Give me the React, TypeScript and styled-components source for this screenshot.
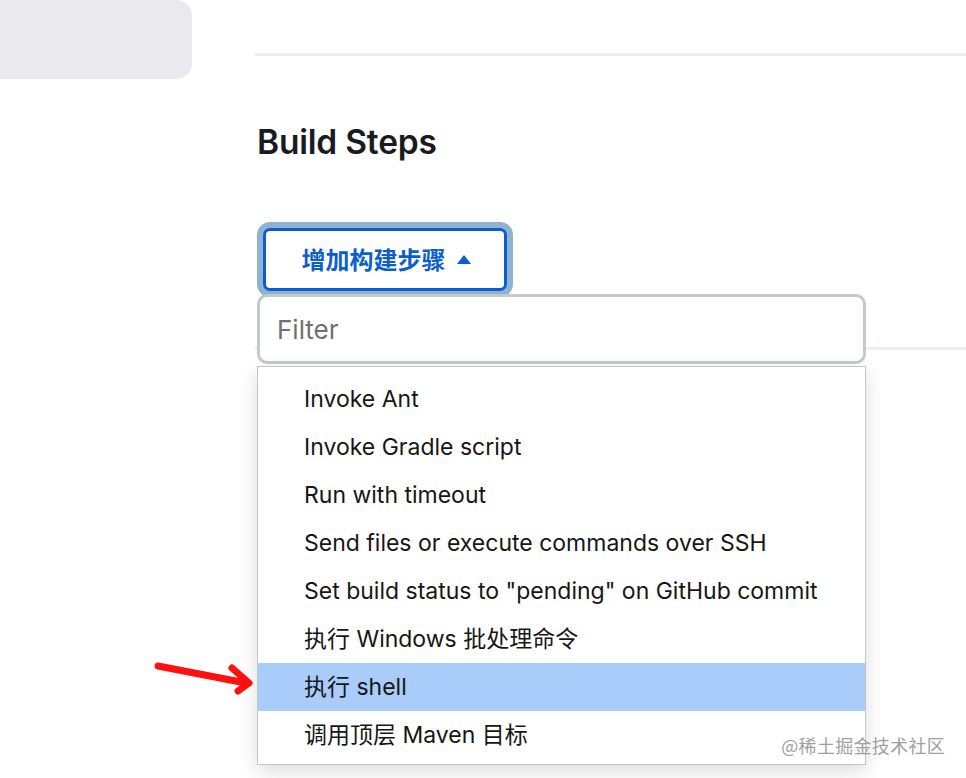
import { createGlobalStyle } from "styled-components";
import styled from "styled-components";

const GlobalStyle = createGlobalStyle`
  html, body {
    margin: 0;
    padding: 0;
    background: #ffffff;
  }
  body {
    font-family: Inter, "Noto Sans", "Noto Sans CJK SC", sans-serif;
    color: #1b1b1f;
  }
`;

const Page = styled.div`
  position: relative;
  display: flex;
  width: 966px;
  height: 778px;
  overflow: hidden;
`;

const Sidebar = styled.aside`
  width: 255px;
  flex-shrink: 0;
`;

const SideCard = styled.div`
  width: 192px;
  height: 79px;
  background: #e9e9ee;
  border-radius: 0 16px 16px 0;
`;

const Main = styled.main`
  flex: 1;
  padding-top: 53px;
`;

const Rule = styled.div<{ $gap?: number }>`
  height: 3px;
  margin-top: ${(p) => p.$gap ?? 0}px;
  background: #efeff1;
`;

const Heading = styled.h2`
  margin: 66px 0 0 2px;
  font-size: 33.5px;
  line-height: 41px;
  font-weight: 600;
  letter-spacing: -0.2px;
  color: #1b1b1f;
`;

const ButtonHolder = styled.div`
  position: relative;
  margin: 65px 0 0 8px;
  width: 244px;
`;

const AddButton = styled.button`
  display: flex;
  align-items: center;
  justify-content: center;
  gap: 11px;
  width: 244px;
  height: 63px;
  padding: 0 0 2px 2px;
  background: #ffffff;
  border: 3px solid #0b5fcd;
  border-radius: 7px;
  box-shadow: 0 0 0 6px #8eb2d1;
  color: #0b5fcd;
  font-family: Inter, "Noto Sans CJK SC", sans-serif;
  font-size: 24px;
  font-weight: 700;
  cursor: pointer;
`;

const Caret = styled.span`
  width: 0;
  height: 0;
  margin-top: 1px;
  border-left: 7.5px solid transparent;
  border-right: 7.5px solid transparent;
  border-bottom: 9px solid #0b5fcd;
`;

const Dropdown = styled.div`
  position: absolute;
  top: calc(100% + 3px);
  left: -6px;
  width: 609px;
  z-index: 2;
`;

const FilterInput = styled.input`
  box-sizing: border-box;
  display: block;
  width: 609px;
  height: 70px;
  padding: 0 17px;
  border: 3px solid #c3c9cc;
  border-radius: 10px;
  background: #ffffff;
  font-family: Inter, "Noto Sans", sans-serif;
  font-size: 26px;
  color: #1b1b1f;
  outline: none;
  &::placeholder {
    color: #707070;
  }
`;

const Menu = styled.ul`
  box-sizing: border-box;
  list-style: none;
  margin: 2px 0 0;
  padding: 8px 0;
  width: 609px;
  height: 399px;
  background: #ffffff;
  border: 1px solid #c6c6c6;
  box-shadow: 0 6px 18px rgba(0, 0, 0, 0.14);
`;

const MenuItem = styled.li<{ $active?: boolean }>`
  height: 48px;
  line-height: 48px;
  padding-left: 46px;
  font-family: Inter, "Noto Sans", "Noto Sans CJK SC", sans-serif;
  font-size: 23px;
  color: #161616;
  white-space: nowrap;
  background: ${(p) => (p.$active ? "#a9ccfb" : "transparent")};
`;

const Arrow = styled.svg`
  position: absolute;
  left: 152px;
  top: 658px;
  z-index: 3;
`;

const Watermark = styled.div`
  position: absolute;
  right: 21px;
  bottom: 20px;
  z-index: 3;
  font-family: "Noto Sans CJK SC", sans-serif;
  font-size: 18px;
  color: #a0a0a0;
  letter-spacing: 0.3px;
`;

const steps = [
  "Invoke Ant",
  "Invoke Gradle script",
  "Run with timeout",
  "Send files or execute commands over SSH",
  'Set build status to "pending" on GitHub commit',
  "执行 Windows 批处理命令",
  "执行 shell",
  "调用顶层 Maven 目标",
];

export default function App() {
  return (
    <>
      <GlobalStyle />
      <Page>
        <Sidebar>
          <SideCard />
        </Sidebar>
        <Main>
          <Rule />
          <Heading>Build Steps</Heading>
          <ButtonHolder>
            <AddButton>
              增加构建步骤
              <Caret />
            </AddButton>
            <Dropdown>
              <FilterInput placeholder="Filter" />
              <Menu>
                {steps.map((s) => (
                  <MenuItem key={s} $active={s === "执行 shell"}>
                    {s}
                  </MenuItem>
                ))}
              </Menu>
            </Dropdown>
          </ButtonHolder>
          <Rule $gap={56} />
        </Main>
        <Arrow width="104" height="40" viewBox="0 0 104 40">
          <path
            d="M6 8 L94 25 M80 10 L97 25 L86 33"
            fill="none"
            stroke="#ff1010"
            strokeWidth="7"
            strokeLinecap="round"
            strokeLinejoin="round"
          />
        </Arrow>
        <Watermark>@稀土掘金技术社区</Watermark>
      </Page>
    </>
  );
}
